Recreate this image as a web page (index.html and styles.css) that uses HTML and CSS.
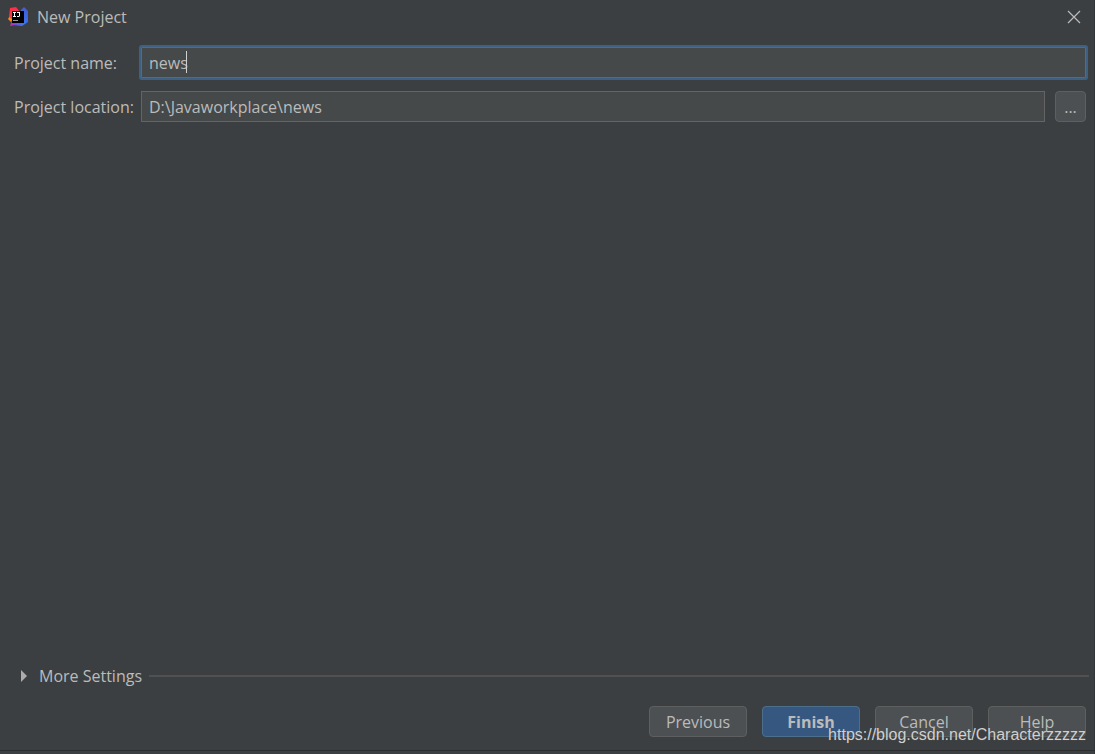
FILE: index.html
```html
<!DOCTYPE html>
<html lang="en">
<head>
<meta charset="utf-8">
<title>New Project</title>
<link rel="stylesheet" href="styles.css">
</head>
<body>
<main class="dialog">
  <header class="titlebar">
    <svg class="logo" viewBox="0 0 20 20" aria-hidden="true">
      <defs>
        <linearGradient id="pink" x1="0" y1="1" x2="1" y2="0"><stop offset="0" stop-color="#f53b3b"/><stop offset="1" stop-color="#fe2857"/></linearGradient>
        <linearGradient id="blue" x1="0" y1="1" x2="1" y2="0"><stop offset="0" stop-color="#8a3fd0"/><stop offset=".4" stop-color="#3478f6"/><stop offset="1" stop-color="#4a55c8"/></linearGradient>
      </defs>
      <path fill="#f98a1c" d="M3 7 0 12l3 3 3-3z"/>
      <path fill="#c32eb0" d="M4 13 2 19l9-2-1-3z"/>
      <path fill="url(#pink)" d="M2 1 8 0l4 5-5 9-6-4z"/>
      <path fill="url(#blue)" d="M13 3 16 0l4 4v11l-6 4-9-1 6-4z"/>
      <path d="M4 4h12v12H4z"/>
      <path fill="#fff" d="M5 5h3v1H7v3h1v1H5V9h1V6H5zM9 5h3v4l-1 1H9V9h2V6H9z"/>
      <path fill="#999" d="M5 13h5v1H5z"/>
    </svg>
    <h1 class="title">New Project</h1>
    <button class="close" aria-label="Close"><svg viewBox="0 0 14 14" aria-hidden="true"><path d="M1 1 13 13M13 1 1 13"/></svg></button>
  </header>
  <form class="form">
    <label class="label" for="name">Project name:</label>
    <div class="field focused"><input id="name" class="input" type="text" value="news"><span class="caret"></span></div>
    <label class="label" for="location">Project location:</label>
    <div class="location">
      <div class="field"><input id="location" class="input" type="text" value="D:\Javaworkplace\news"></div>
      <button class="button browse" type="button" aria-label="Browse">...</button>
    </div>
  </form>
  <button class="more"><svg viewBox="0 0 8 12" aria-hidden="true"><path d="M1 0 7 6 1 12z"/></svg><span>More Settings</span><span class="rule"></span></button>
  <footer class="actions">
    <button class="button">Previous</button>
    <button class="button primary">Finish</button>
    <button class="button">Cancel</button>
    <button class="button">Help</button>
  </footer>
  <div class="watermark">https://blog.csdn.net/Characterzzzzz</div>
</main>
</body>
</html>
```
FILE: styles.css
```css
* { box-sizing: border-box; }
body { margin: 0; }
body, button, input { font: 16px/24px "Open Sans", "Noto Sans", sans-serif; color: #bbb; }
.dialog {
  position: relative;
  display: flex;
  flex-direction: column;
  min-height: 100vh;
  background: #3c3f41;
  box-shadow: inset -1px 0 #323537;
}
.titlebar { display: flex; align-items: center; height: 34px; padding: 0 14px 0 8px; }
.logo { width: 20px; height: 20px; margin-right: 9px; }
.title { flex: 1; margin: 0; font-size: 16px; font-weight: 400; }
.close { display: flex; padding: 0; border: 0; background: none; }
.close svg { width: 14px; height: 14px; fill: none; stroke: #bbb; stroke-width: 1.2; }
.form {
  display: grid;
  grid-template-columns: 119px 1fr;
  column-gap: 8px;
  row-gap: 13px;
  align-items: center;
  padding: 13px 9px 0 14px;
}
.label { white-space: nowrap; }
.location { display: flex; gap: 10px; }
.field { position: relative; flex: 1; height: 31px; border: 1px solid #646464; background: #45494a; }
.focused { border-color: #466d94; box-shadow: 0 0 0 2px #3d6185; border-radius: 1px; }
.input { display: block; width: 100%; height: 29px; padding: 0 7px; border: 0; outline: 0; background: none; }
.caret { position: absolute; left: 44px; top: 3px; width: 1px; height: 22px; background: #d0d0d0; }
.button {
  width: 98px;
  height: 31px;
  padding: 0;
  border: 1px solid #5e6060;
  border-radius: 4px;
  background: #4c5052;
}
.button.browse { width: 31px; }
.button.primary { border-color: #4c708c; background: #365880; font-weight: 700; }
.more {
  display: flex;
  align-items: center;
  margin: auto 6px 0 20px;
  padding: 0;
  border: 0;
  background: none;
}
.more svg { width: 8px; height: 12px; margin-right: 11px; fill: #adadad; }
.rule { flex: 1; height: 2px; margin-left: 7px; background: #515151; }
.actions {
  display: flex;
  justify-content: flex-end;
  gap: 15px;
  padding: 18px 9px 13px 0;
  border-bottom: 1px solid #2b2d2e;
  margin-bottom: 3px;
}
.watermark {
  position: absolute;
  right: 9px;
  bottom: 9px;
  font: 16px/20px "Liberation Sans", Arial, sans-serif;
  color: #d0d0d0;
  text-shadow: 0 1px 1px #444;
}
```
